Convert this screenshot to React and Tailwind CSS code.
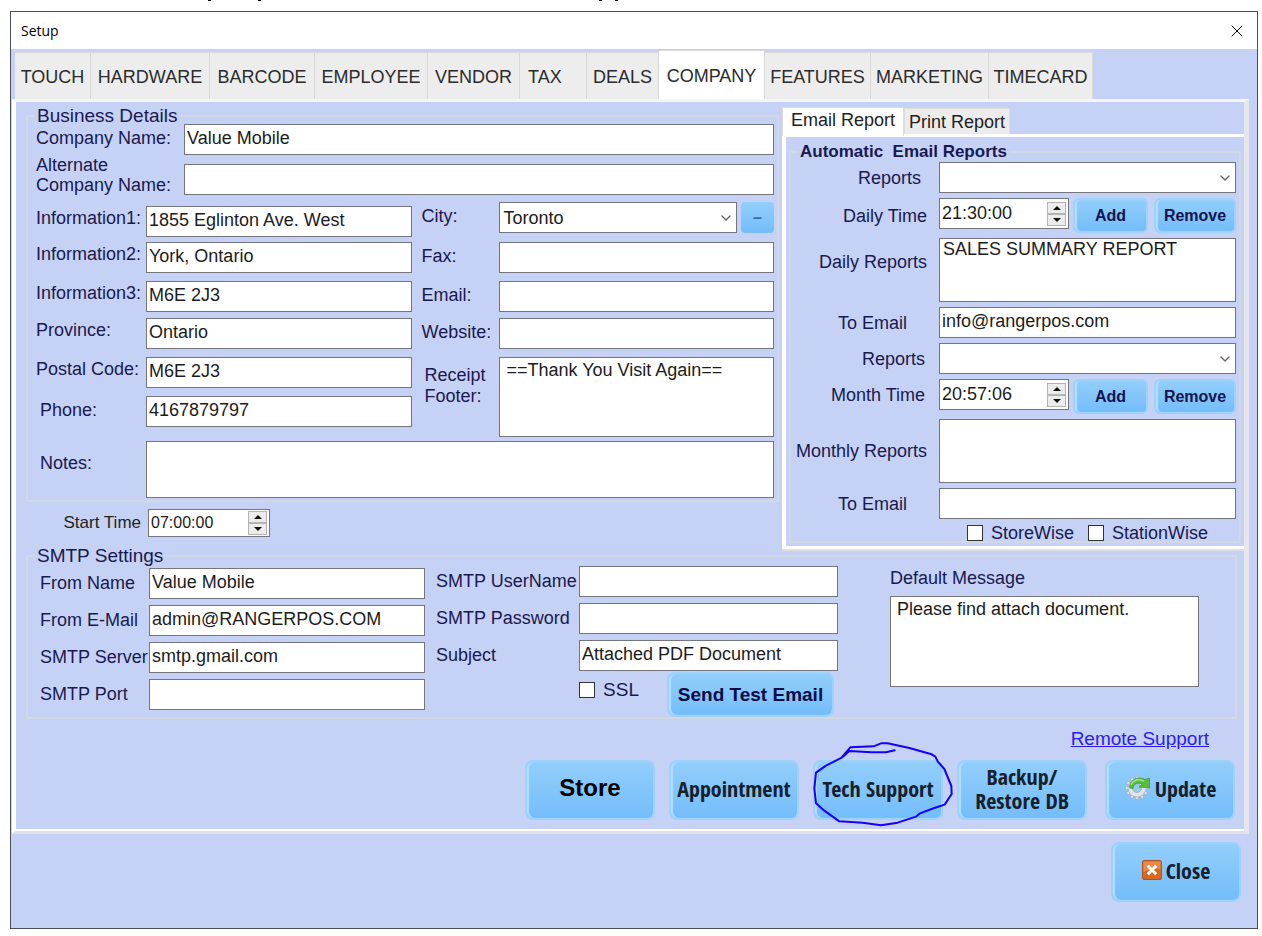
import { ChevronDown, X } from 'lucide-react'

const tabs = [
  { name: 'TOUCH', width: 'w-[76px]' },
  { name: 'HARDWARE', width: 'w-[119px]' },
  { name: 'BARCODE', width: 'w-[105px]' },
  { name: 'EMPLOYEE', width: 'w-[113px]' },
  { name: 'VENDOR', width: 'w-[92px]' },
  { name: 'TAX', width: 'w-[67px]' },
  { name: 'DEALS', width: 'w-[72px]' },
  { name: 'COMPANY', width: 'w-[106px]', active: true },
  { name: 'FEATURES', width: 'w-[106px]' },
  { name: 'MARKETING', width: 'w-[118px]' },
  { name: 'TIMECARD', width: 'w-[104px]' },
]

const box = 'border border-[#74767c] bg-white text-[#1c1c1c] rounded-none outline-none'

function TextInput({ id, value = '', type = 'text', className = '' }) {
  return <input id={id} type={type} defaultValue={value} className={`${box} h-[31px] min-w-0 pl-[2px] pb-[2px] ${className}`} />
}

function TextArea({ id, value = '', className = '' }) {
  return <textarea id={id} defaultValue={value} className={`${box} min-w-0 resize-none pl-[6px] pt-px leading-[22px] ${className}`} />
}

function Select({ id, value = '', className = '' }) {
  return (
    <div className={`relative h-[31px] min-w-0 ${className}`}>
      <select id={id} defaultValue={value} className={`${box} h-full w-full appearance-none pl-[3px]`}>
        <option>{value}</option>
      </select>
      <ChevronDown size={16} strokeWidth={2} className="pointer-events-none absolute right-[3px] top-2 text-[#666]" />
    </div>
  )
}

function ListBox({ id, items = [] }) {
  return (
    <select id={id} size={3} className={`${box} h-[64px] min-w-0 flex-1 appearance-none overflow-hidden pl-[3px]`}>
      {items.map((item) => (
        <option key={item} className="p-0 leading-[22px]">{item}</option>
      ))}
    </select>
  )
}

function SpinButton({ label, up }) {
  return (
    <button type="button" aria-label={label} className="flex h-[12px] w-[19px] items-center justify-center border border-[#b4b4b4] bg-[#ececec]">
      <svg width="8" height="4" viewBox="0 0 8 4" fill="#111">
        {up ? <path d="M4 0 8 4H0Z" /> : <path d="M0 0H8L4 4Z" />}
      </svg>
    </button>
  )
}

function TimeInput({ id, value, className = '' }) {
  return (
    <div className={`${box} flex shrink-0 items-center pr-[2px] ${className}`}>
      <input id={id} type="text" defaultValue={value} className="h-full min-w-0 flex-1 bg-transparent pl-[2px] outline-none" />
      <div className="flex flex-col">
        <SpinButton label="Increase" up />
        <SpinButton label="Decrease" />
      </div>
    </div>
  )
}

const glossy = 'bg-linear-to-b from-[#92cefb] to-[#74bdfa] border-2 border-[#9dd2fb] shadow-[inset_2px_0_1px_#b3defd]'

function SmallButton({ children, className }) {
  return (
    <button type="button" className={`${glossy} h-[35px] rounded-md text-base font-bold text-[#14144e] ${className}`}>
      {children}
    </button>
  )
}

function BigButton({ children, className = "font-['Liberation_Sans_Narrow','Open_Sans_Condensed','Roboto_Condensed','Open_Sans',sans-serif] text-[22px] font-semibold" }) {
  return (
    <button type="button" className={`${glossy} flex h-[60px] w-[130px] items-center justify-center gap-1 rounded-lg pb-1 leading-6 text-[#16202c] ${className}`}>
      {children}
    </button>
  )
}

function Group({ title, className = '', legendClass = 'text-[19px]', children }) {
  return (
    <fieldset className={`min-w-0 border-2 border-[#d2d7e4] ${className}`}>
      <legend className={`ml-[6px] px-[3px] leading-[8px] whitespace-pre ${legendClass}`}>{title}</legend>
      {children}
    </fieldset>
  )
}

function CheckBox({ id, label, className = '' }) {
  return (
    <div className={`flex items-center gap-2 ${className}`}>
      <input id={id} type="checkbox" className="size-4 appearance-none border border-[#333] bg-white" />
      <label htmlFor={id}>{label}</label>
    </div>
  )
}

function GearIcon() {
  return (
    <svg width="27" height="26" viewBox="0 0 27 26">
      <g fill="#e4e5e8" stroke="#a2a5ab" strokeWidth="0.6">
        {[0, 30, 60, 90, 120, 150, 180, 210, 240, 270, 300, 330].map((a) => (
          <rect key={a} x="11.6" y="1.5" width="2.8" height="5" rx="0.6" transform={`rotate(${a} 13 13)`} />
        ))}
        <circle cx="13" cy="13" r="9" />
      </g>
      <circle cx="13" cy="13" r="4.6" fill="#8fd0e8" stroke="#a9acb2" strokeWidth="0.8" />
      <path d="M5.500 13C5 5 14 0.500 21 4.500L25.500 3V13L15 12 18 9.300C14 7 9.500 8.500 9 13.500Z" fill="#56bd3f" stroke="#2f8f2a" strokeWidth="0.6" />
      <path d="M7 10C9 4.500 15 3.500 20 6" fill="none" stroke="#a5e58c" strokeWidth="1.4" />
    </svg>
  )
}

function CloseIcon() {
  return (
    <svg width="20" height="20" viewBox="0 0 20 20">
      <rect x="0.5" y="0.5" width="19" height="19" rx="1.5" fill="#d9691e" stroke="#a9562a" />
      <path d="M1.500 1.500H18.500V9C12 8 7 9 1.500 12Z" fill="#ea8b45" />
      <path d="M5.800 5.800 14.200 14.200M14.200 5.800 5.800 14.200" stroke="#fff" strokeWidth="3" />
    </svg>
  )
}

// pen loop drawn round the Tech Support button
function PenCircle() {
  return (
    <svg className="pointer-events-none absolute -left-[2px] -top-5 h-[88px] w-[147px]" viewBox="930 60 441 264" fill="none" stroke="#1400ff" strokeWidth="6" strokeLinecap="round" strokeLinejoin="round">
      <path d="M1181 91 1155 97H1110L1045 93 1022 113 975 137 945 158 940 205 945 250 970 272 1015 304 1085 308 1140 316 1190 308 1245 290 1257 280 1300 264 1331 254 1352 222 1351 198 1330 147 1310 124 1303 110 1292 103 1225 84 1160 70H1140L1118 79 1048 82 1024 110" />
    </svg>
  )
}

function FormLabel({ htmlFor, children, className = '' }) {
  return <label htmlFor={htmlFor} className={`h-[31px] whitespace-nowrap ${className}`}>{children}</label>
}

function BusinessDetails() {
  return (
    <Group title="Business Details">
      <div className="pt-1 pr-[3px] pb-[2px] pl-2">
        <div className="flex">
          <FormLabel htmlFor="company" className="w-[148px] leading-7">Company Name:</FormLabel>
          <TextInput id="company" value="Value Mobile" className="flex-1" />
        </div>
        <div className="flex items-end">
          <label htmlFor="alternate" className="w-[148px] leading-5">Alternate<br />Company Name:</label>
          <TextInput id="alternate" className="flex-1" />
        </div>

        <div className="mt-[7px] grid grid-cols-[110px_266fr_87px_274fr] grid-rows-[35px_36px_39px_37px_39px_39px_10px] items-end">
          <FormLabel htmlFor="info1" className="leading-6">Information1:</FormLabel>
          <TextInput id="info1" value="1855 Eglinton Ave. West" />
          <FormLabel htmlFor="city" className="self-start pl-[9px] leading-7">City:</FormLabel>
          <div className="flex gap-1 self-start">
            <Select id="city" value="Toronto" className="flex-1" />
            <button type="button" className="h-[31px] w-[33px] rounded-sm bg-linear-to-b from-[#92cefb] to-[#74bdfa] text-base font-bold text-[#3b6fa3]">–</button>
          </div>

          <FormLabel htmlFor="info2" className="leading-6">Information2:</FormLabel>
          <TextInput id="info2" value="York, Ontario" />
          <FormLabel htmlFor="fax" className="pl-[9px] leading-7">Fax:</FormLabel>
          <TextInput id="fax" />

          <FormLabel htmlFor="info3" className="leading-6">Information3:</FormLabel>
          <TextInput id="info3" value="M6E 2J3" />
          <FormLabel htmlFor="email" className="pl-[9px] leading-7">Email:</FormLabel>
          <TextInput id="email" />

          <FormLabel htmlFor="province" className="leading-6">Province:</FormLabel>
          <TextInput id="province" value="Ontario" />
          <FormLabel htmlFor="website" className="pl-[9px] leading-7">Website:</FormLabel>
          <TextInput id="website" />

          <FormLabel htmlFor="postal" className="leading-6">Postal Code:</FormLabel>
          <TextInput id="postal" value="M6E 2J3" />
          <label htmlFor="footer" className="row-span-3 self-start pt-4 pl-3 leading-[21px]">Receipt Footer:</label>
          <TextArea id="footer" value="==Thank You Visit Again==" className="row-span-3 h-[80px]" />

          <FormLabel htmlFor="phone" className="pl-1 leading-7">Phone:</FormLabel>
          <TextInput id="phone" value="4167879797" />
        </div>

        <div className="mt-1 flex">
          <label htmlFor="notes" className="w-[110px] pl-1 leading-[44px]">Notes:</label>
          <TextArea id="notes" className="h-[57px] flex-1" />
        </div>
      </div>
    </Group>
  )
}

function ReportRow({ id, label, labelClass = 'pr-3', children }) {
  return (
    <div className="flex items-start">
      <label htmlFor={id} className={`w-[148px] shrink-0 self-center text-right ${labelClass}`}>{label}</label>
      {children}
    </div>
  )
}

function EmailReports() {
  return (
    <section className="mt-[5px] w-[462px] shrink-0">
      <div className="flex h-[27px] items-end">
        <button type="button" className="h-[29px] w-[122px] self-start border-x border-t border-[#dcdcdc] bg-white pb-1 text-[#222]">Email Report</button>
        <button type="button" className="h-[26px] w-[106px] border-x border-t border-[#dcdcdc] bg-[#ececec] text-[#222]">Print Report</button>
      </div>
      <div className="border-b-2 border-[#dfe0e4]">
        <div className="border-t-3 border-b-3 border-l-4 border-white px-[3px] pt-[11px] pb-[3px]">
          <Group title="Automatic  Email Reports" legendClass="text-[17px] font-bold">
            <div className="flex flex-col gap-[5px] pt-[6px] pr-[3px]">
              <ReportRow id="daily-report" label="Reports" labelClass="pr-[18px]">
                <Select id="daily-report" className="flex-1" />
              </ReportRow>
              <ReportRow id="daily-time" label="Daily Time">
                <TimeInput id="daily-time" value="21:30:00" className="h-[31px] w-[130px]" />
                <SmallButton className="ml-1 w-[75px]">Add</SmallButton>
                <SmallButton className="ml-[6px] w-[82px]">Remove</SmallButton>
              </ReportRow>
              <ReportRow id="daily-list" label="Daily Reports" labelClass="pr-3 pb-4">
                <ListBox id="daily-list" items={['SALES SUMMARY REPORT']} />
              </ReportRow>
              <ReportRow id="daily-to" label="To Email" labelClass="pr-8">
                <TextInput id="daily-to" value="info@rangerpos.com" className="flex-1" />
              </ReportRow>
              <ReportRow id="month-report" label="Reports" labelClass="pr-[14px]">
                <Select id="month-report" className="flex-1" />
              </ReportRow>
              <ReportRow id="month-time" label="Month Time" labelClass="pr-[14px] pb-1">
                <TimeInput id="month-time" value="20:57:06" className="h-[31px] w-[130px]" />
                <SmallButton className="ml-1 w-[75px]">Add</SmallButton>
                <SmallButton className="ml-[6px] w-[82px]">Remove</SmallButton>
              </ReportRow>
              <ReportRow id="month-list" label="Monthly Reports">
                <ListBox id="month-list" />
              </ReportRow>
              <ReportRow id="month-to" label="To Email" labelClass="pr-8">
                <TextInput id="month-to" className="flex-1" />
              </ReportRow>
              <div className="flex h-[17px] items-center justify-end gap-[14px] pr-7">
                <CheckBox id="storewise" label="StoreWise" />
                <CheckBox id="stationwise" label="StationWise" />
              </div>
            </div>
          </Group>
        </div>
      </div>
    </section>
  )
}

const smtpFields = [
  ['from-name', 'From Name', 'Value Mobile'],
  ['from-email', 'From E-Mail', 'admin@RANGERPOS.COM'],
  ['smtp-server', 'SMTP Server', 'smtp.gmail.com'],
  ['smtp-port', 'SMTP Port', ''],
]

function SmtpSettings() {
  return (
    <Group title="SMTP Settings" className="mt-px mr-[7px] ml-[10px]">
      <div className="flex">
        <div className="flex flex-col gap-[6px] pt-2 pl-3">
          {smtpFields.map(([id, label, value]) => (
            <div key={id} className="flex">
              <FormLabel htmlFor={id} className="w-[109px] leading-[31px]">{label}</FormLabel>
              <TextInput id={id} value={value} className="w-[276px]" />
            </div>
          ))}
        </div>

        <div className="pt-[6px] pl-[11px]">
          <div className="flex flex-col gap-[6px]">
            <div className="flex">
              <FormLabel htmlFor="smtp-user" className="w-[143px] leading-[31px]">SMTP UserName</FormLabel>
              <TextInput id="smtp-user" className="w-[259px]" />
            </div>
            <div className="flex">
              <FormLabel htmlFor="smtp-pass" className="w-[143px] leading-[31px]">SMTP Password</FormLabel>
              <TextInput id="smtp-pass" type="password" className="w-[259px]" />
            </div>
            <div className="flex">
              <FormLabel htmlFor="subject" className="w-[143px] leading-[31px]">Subject</FormLabel>
              <TextInput id="subject" value="Attached PDF Document" className="w-[259px]" />
            </div>
          </div>
          <div className="mt-px flex justify-end pr-1">
            <CheckBox id="ssl" label="SSL" className="mr-7 h-[36px] text-[19px]" />
            <button type="button" className={`${glossy} h-[45px] w-[167px] rounded-lg text-[19px] font-bold text-[#0c0c46]`}>Send Test Email</button>
          </div>
        </div>

        <div className="flex flex-1 flex-col pt-[6px] pr-9 pl-[52px]">
          <label htmlFor="message" className="h-[30px] leading-6">Default Message</label>
          <TextArea id="message" value="Please find attach document." className="h-[91px]" />
        </div>
      </div>
    </Group>
  )
}

export default function App() {
  return (
    <div className="min-h-screen bg-white pr-1 pl-[10px] font-['Liberation_Sans',Arial,sans-serif] text-lg leading-6 text-[#191950]">
      {/* tails of the caption line that has scrolled off above the window */}
      <div className="flex h-[11px] items-start pl-[198px]">
        <span className="h-px w-[3px] bg-black" />
        <span className="ml-[47px] h-px w-[3px] bg-black" />
        <span className="ml-[338px] h-px w-[3px] bg-black" />
        <span className="ml-[13px] h-px w-[3px] bg-black" />
      </div>
      <main className="border border-[#4c4f5c] bg-[#c6d2f5]">
        <header className="flex h-[37px] items-center justify-between bg-white pr-[14px] pl-[10px]">
          <h1 className="font-['Open_Sans','Noto_Sans',sans-serif] text-sm text-black">Setup</h1>
          <button type="button" aria-label="Close window" className="text-black">
            <X size={20} strokeWidth={1.2} className="-mr-1" />
          </button>
        </header>

        <nav className="flex h-[50px] items-end pl-1">
          {tabs.map((tab) => (
            <button
              key={tab.name}
              type="button"
              className={`border-t border-r border-[#d9d9d9] pt-[2px] text-[#2b2b2b] ${tab.width} ${tab.active ? 'h-[49px] bg-white' : 'h-[47px] bg-[#ededed]'} ${tab.name === 'TAX' ? 'pl-2 text-left' : ''}`}
            >
              {tab.name}
            </button>
          ))}
        </nav>

        <div className="mr-2 ml-px border-t-3 border-r-5 border-b-3 border-l-4 border-t-[#f5f5f7] border-r-[#e6e7ec] border-b-[#e0e1e5] border-l-white">
          <div className="border-b-2 border-white">
            <div className="flex">
              <div className="flex-1 pt-[10px] pr-[3px] pl-[10px]">
                <BusinessDetails />
                <div className="mt-[7px] flex items-center text-[#222]">
                  <label htmlFor="start-time" className="w-[122px] pr-[7px] text-right text-[17px]">Start Time</label>
                  <TimeInput id="start-time" value="07:00:00" className="h-7 w-[122px] text-base" />
                </div>
              </div>
              <EmailReports />
            </div>

            <SmtpSettings />

            <div className="mt-2 flex justify-end pr-[35px]">
              <a href="#remote" className="text-[19px] text-[#2a1cf0] underline">Remote Support</a>
            </div>
            <div className="mt-[9px] flex justify-end gap-[14px] pr-[9px] pb-[9px]">
              <BigButton className="text-2xl font-bold text-black">Store</BigButton>
              <BigButton>Appointment</BigButton>
              <div className="relative">
                <BigButton>Tech Support</BigButton>
                <PenCircle />
              </div>
              <BigButton>Backup/<br />Restore DB</BigButton>
              <div className="pl-1">
                <BigButton>
                  <GearIcon />
                  Update
                </BigButton>
              </div>
            </div>
          </div>
        </div>

        <footer className="flex justify-end pt-2 pr-4 pb-[26px]">
          <BigButton>
            <CloseIcon />
            Close
          </BigButton>
        </footer>
      </main>
    </div>
  )
}
